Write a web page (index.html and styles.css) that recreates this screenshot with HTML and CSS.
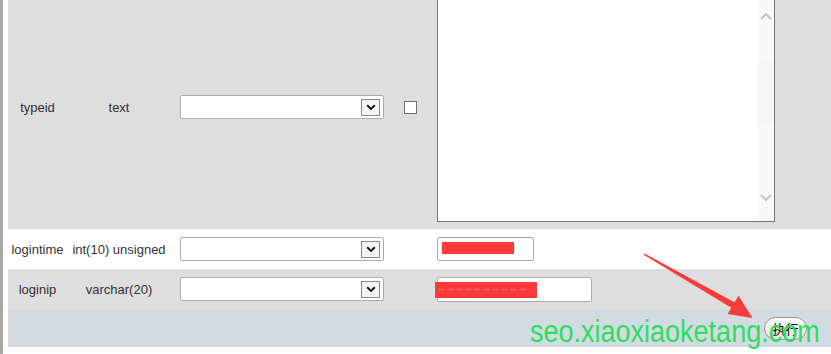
FILE: index.html
```html
<!DOCTYPE html>
<html lang="zh">
<head>
<meta charset="utf-8">
<title>Insert</title>
<link rel="stylesheet" href="styles.css">
</head>
<body>
<div class="frame">
  <div class="grid">
    <div class="row row-grey row-tall">
      <div class="c-name">typeid</div>
      <div class="c-type">text</div>
      <div class="c-func">
        <div class="sel"><span class="sel-btn"><svg width="10" height="7" viewBox="0 0 10 7"><path d="M1.2 1.3 L5 5 L8.8 1.3" fill="none" stroke="#111" stroke-width="1.9"/></svg></span></div>
      </div>
      <div class="c-null"><span class="chk"></span></div>
      <div class="c-val">
        <div class="ta">
          <div class="ta-body"></div>
          <div class="ta-scroll">
            <svg width="12" height="8" viewBox="0 0 12 8"><path d="M1 7 L6 2 L11 7" fill="none" stroke="#c4c4c4" stroke-width="2"/></svg>
            <span class="ta-thumb"></span>
            <svg width="12" height="8" viewBox="0 0 12 8"><path d="M1 1 L6 6 L11 1" fill="none" stroke="#c4c4c4" stroke-width="2"/></svg>
          </div>
        </div>
      </div>
    </div>

    <div class="row row-white">
      <div class="c-name">logintime</div>
      <div class="c-type">int(10) unsigned</div>
      <div class="c-func">
        <div class="sel"><span class="sel-btn"><svg width="10" height="7" viewBox="0 0 10 7"><path d="M1.2 1.3 L5 5 L8.8 1.3" fill="none" stroke="#111" stroke-width="1.9"/></svg></span></div>
      </div>
      <div class="c-null"></div>
      <div class="c-val">
        <div class="inp inp-short"><span class="redact redact-a"></span></div>
      </div>
    </div>

    <div class="row row-grey">
      <div class="c-name">loginip</div>
      <div class="c-type">varchar(20)</div>
      <div class="c-func">
        <div class="sel"><span class="sel-btn"><svg width="10" height="7" viewBox="0 0 10 7"><path d="M1.2 1.3 L5 5 L8.8 1.3" fill="none" stroke="#111" stroke-width="1.9"/></svg></span></div>
      </div>
      <div class="c-null"></div>
      <div class="c-val">
        <div class="inp inp-long"><span class="redact redact-b"></span></div>
      </div>
    </div>

    <div class="row-foot">
      <button class="btn" type="button">执行</button>
    </div>
  </div>
</div>

<svg class="arrow" width="831" height="354" viewBox="0 0 831 354">
  <polygon points="644.3,253.4 734.5,302.2 738.5,295.8 752.5,318 727.5,314 731.3,307.8 643.7,254.8" fill="#fb3a3a"/>
</svg>
<div class="watermark">seo.xiaoxiaoketang.com</div>
</body>
</html>
```

FILE: styles.css
```css
html, body {
  margin: 0;
  padding: 0;
  background: #ffffff;
  overflow: hidden;
}

body {
  width: 831px;
  height: 354px;
  font-family: "Liberation Sans", Arial, sans-serif;
  font-size: 13px;
  color: #333333;
}

.frame {
  margin-top: -15px;
  min-height: 380px;
  border-left: 3px solid #a9a9a9;
  padding-left: 5px;
}

.grid {
  display: flex;
  flex-direction: column;
}

.row {
  display: grid;
  grid-template-columns: 59px 104px 224px 42px 1fr;
  align-items: center;
  height: 40px;
}

.row-grey { background: #dedede; }
.row-white { background: #ffffff; }

.row-tall {
  height: auto;
}

.c-name, .c-type {
  text-align: center;
  white-space: nowrap;
}

.c-func {
  padding-left: 9px;
}

.c-null {
  display: flex;
  justify-content: flex-start;
  padding-left: 9px;
}

.sel {
  box-sizing: border-box;
  width: 204px;
  height: 24px;
  background: #ffffff;
  border: 1px solid #adadad;
  border-radius: 2px;
  display: flex;
  align-items: center;
  justify-content: flex-end;
  padding-right: 3px;
}

.sel-btn {
  box-sizing: border-box;
  width: 19px;
  height: 17px;
  border: 1px solid #8a8a8a;
  background: #f4f4f4;
  display: flex;
  align-items: center;
  justify-content: center;
}

.chk {
  box-sizing: border-box;
  width: 13px;
  height: 13px;
  border: 1px solid #6f6f6f;
  background: #ffffff;
}

.ta {
  box-sizing: border-box;
  width: 338px;
  height: 229px;
  margin: 8px 0 7px 0;
  border: 1px solid #777777;
  background: #ffffff;
  display: flex;
}

.ta-body {
  flex: 1;
}

.ta-scroll {
  width: 17px;
  background: #f9f9f9;
  display: flex;
  flex-direction: column;
  align-items: center;
  padding: 18px 0 19px 0;
}

.ta-thumb {
  width: 13px;
  height: 65px;
  margin-top: 40px;
  margin-bottom: auto;
  background: #f6f6f6;
}

.inp {
  box-sizing: border-box;
  height: 24px;
  border: 1px solid #ababab;
  border-radius: 2px;
  background: #ffffff;
  position: relative;
}

.inp-short { width: 97px; }
.inp-long { width: 155px; height: 25px; }

.redact {
  position: absolute;
  background: #fc3a3a;
}

.redact-a {
  left: 4px;
  top: 4px;
  width: 72px;
  height: 12px;
}

.redact-b {
  left: -3px;
  top: 4px;
  width: 102px;
  height: 16px;
  background:
    repeating-linear-gradient(90deg, rgba(255,255,255,0.35) 0 5px, transparent 5px 9px) 4px 7px / 90px 1px no-repeat,
    #fc3a3a;
}

.row-foot {
  background: #d3dbe2;
  height: 38px;
  display: flex;
  align-items: center;
  justify-content: flex-end;
  padding-right: 24px;
}

.btn {
  box-sizing: border-box;
  width: 43px;
  height: 23px;
  padding: 0;
  border: 1px solid #999999;
  border-radius: 12px;
  background: linear-gradient(#fbfbfb, #e4e4e4);
  font-family: "Noto Sans CJK SC", "Liberation Sans", sans-serif;
  font-size: 13px;
  color: #000000;
  line-height: 21px;
}

.arrow {
  position: absolute;
  left: 0;
  top: 0;
  pointer-events: none;
}

.watermark {
  position: absolute;
  left: 530px;
  top: 320px;
  font-family: "Liberation Sans", Arial, sans-serif;
  font-size: 27px;
  line-height: 27px;
  color: #2fde5c;
  white-space: nowrap;
  transform: scaleY(1.18);
  transform-origin: 0 23px;
  pointer-events: none;
}
```
